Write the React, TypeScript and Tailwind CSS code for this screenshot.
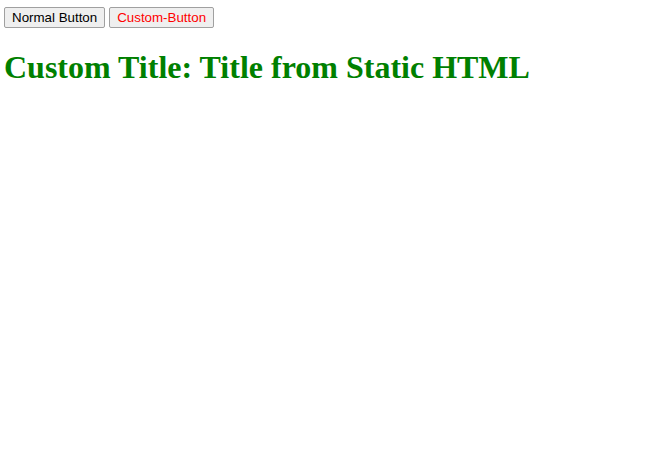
export default function App() {
  return (
    <div className="pl-[4px] pt-[7px]" style={{ fontFamily: '"Liberation Serif", serif' }}>
      <div className="flex gap-[4px]">
        <button className="h-[21px] px-[7px] border border-[#a0a0a0] rounded-[2px] bg-[#efefef] text-[13.33px] text-black leading-none font-['Liberation_Sans',Arial,sans-serif]">
          Normal Button
        </button>
        <button className="h-[21px] px-[7px] border border-[#a0a0a0] rounded-[2px] bg-[#efefef] text-[13.33px] text-[#ff0000] leading-none font-['Liberation_Sans',Arial,sans-serif]">
          Custom-Button
        </button>
      </div>
      <h1 className="mt-[15px] text-[32px] font-bold text-[#008000] font-['Liberation_Serif',serif] leading-normal">
        Custom Title: Title from Static HTML
      </h1>
    </div>
  );
}
